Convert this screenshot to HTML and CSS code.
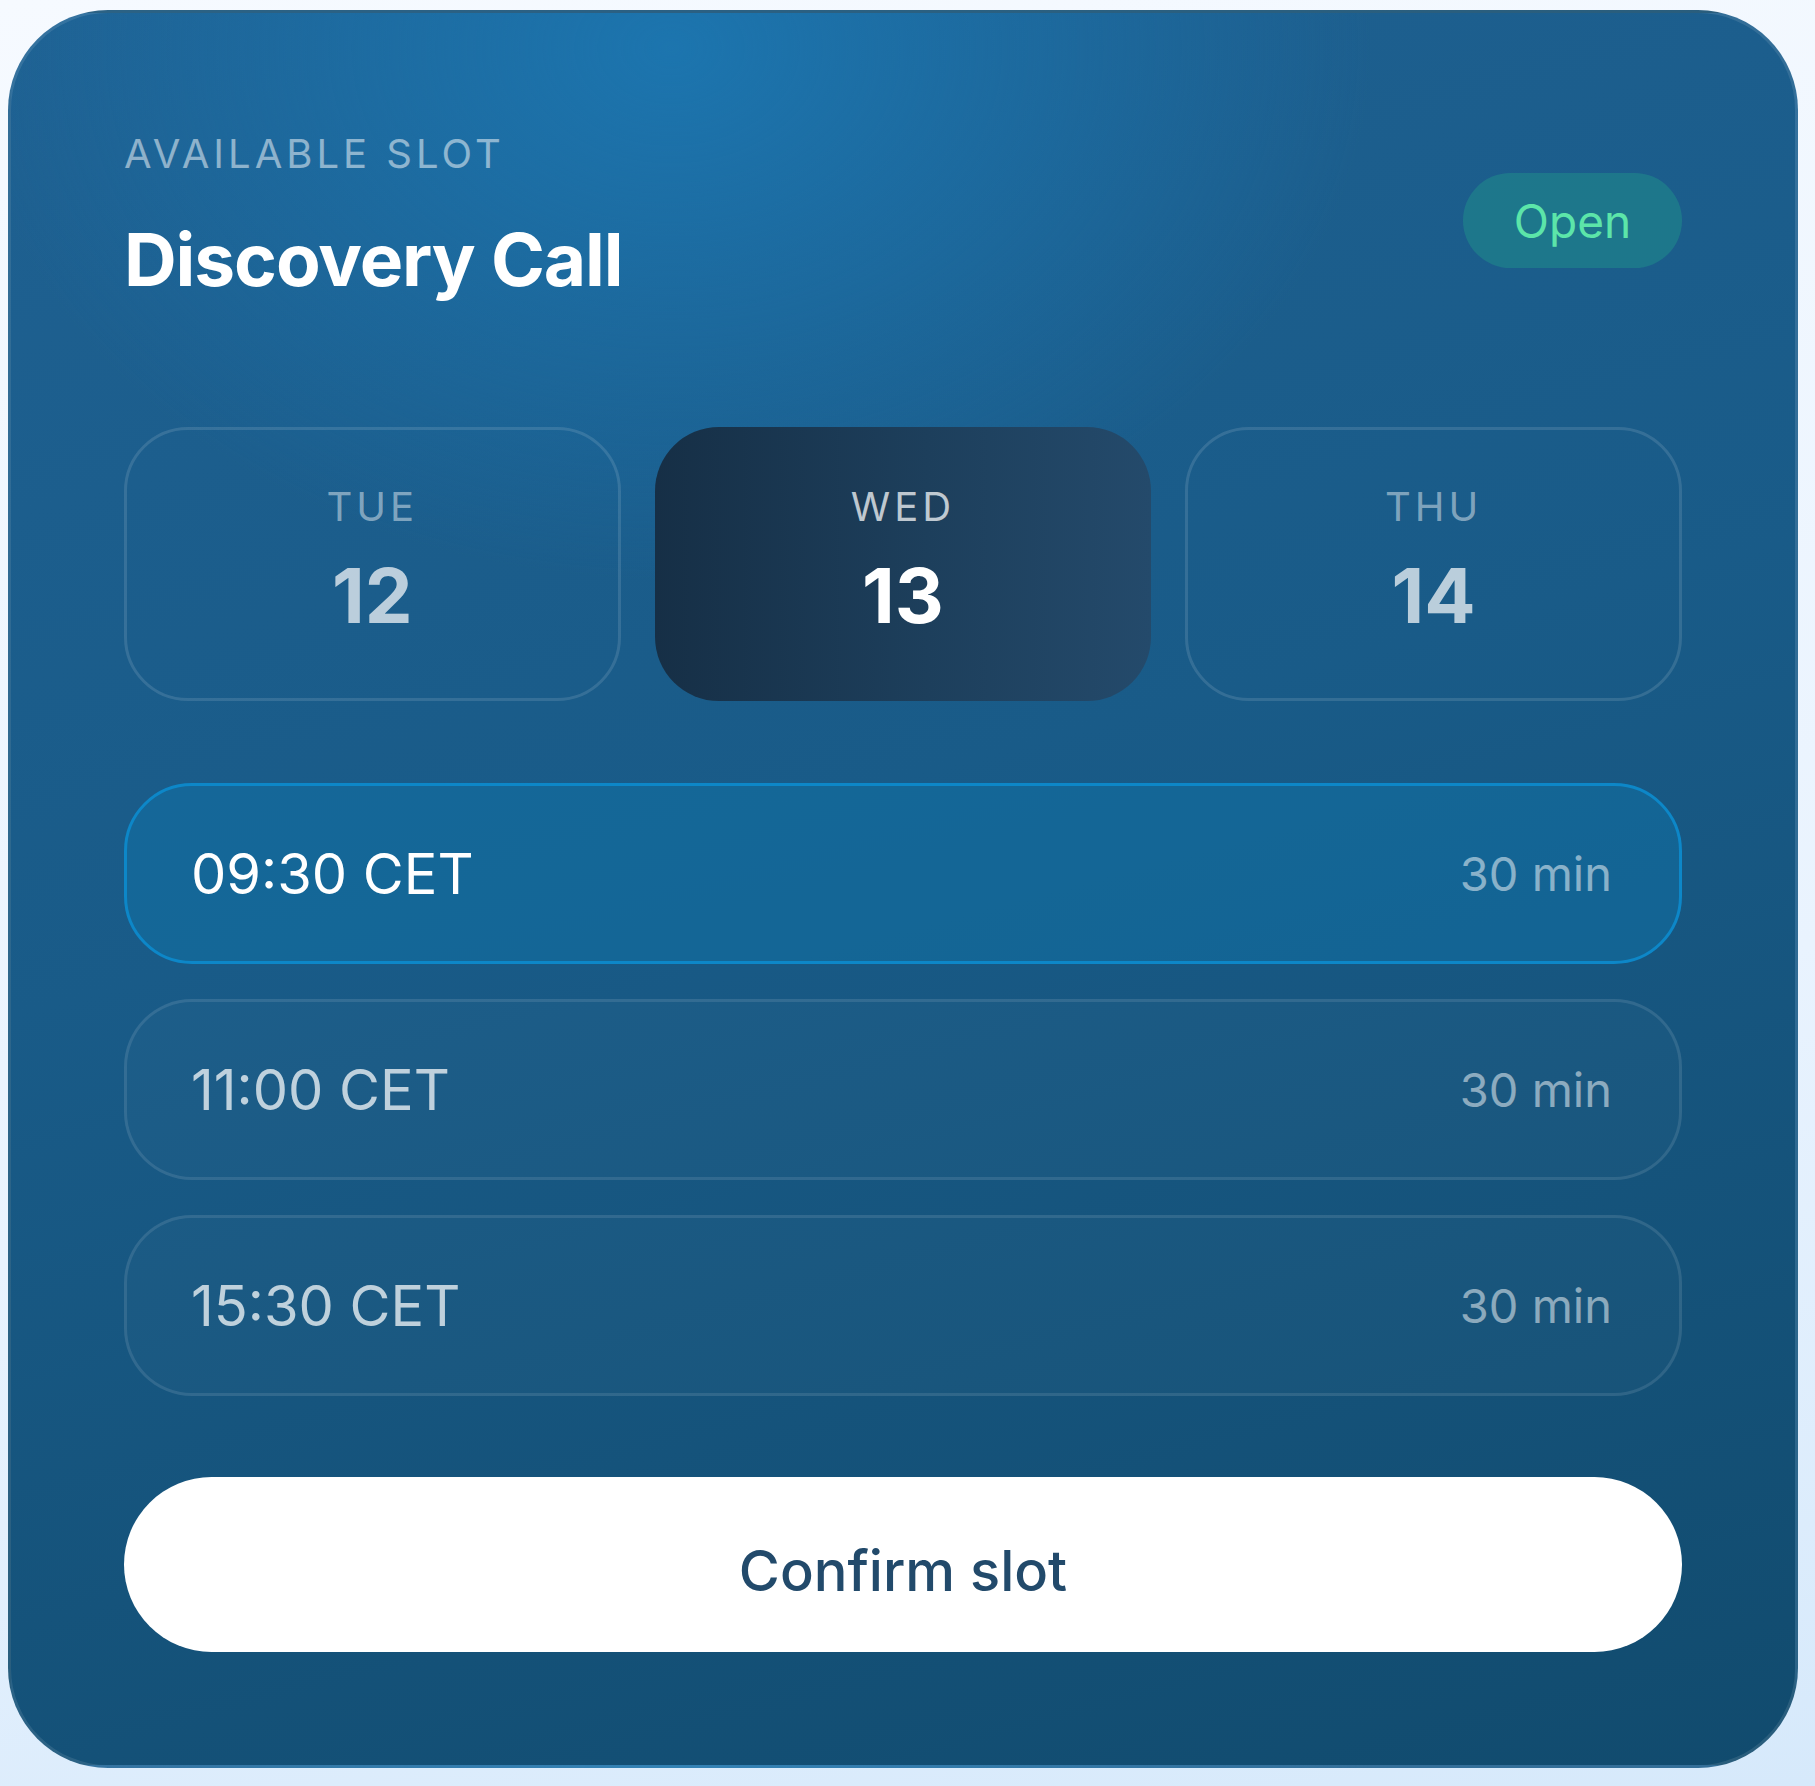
FILE: index.html
```html
<!DOCTYPE html>
<html lang="en">
<head>
  <meta charset="UTF-8">
  <meta name="viewport" content="width=device-width, initial-scale=1.0">
  <title>Discovery Call</title>
  <link rel="stylesheet" href="styles.css">
</head>
<body>
  <div class="card">
    <header class="header">
      <div>
        <p class="eyebrow">Available slot</p>
        <h1>Discovery Call</h1>
      </div>
      <span class="status">Open</span>
    </header>

    <div class="days">
      <div class="day">
        <span class="day-name">Tue</span>
        <span class="day-num">12</span>
      </div>
      <div class="day active">
        <span class="day-name">Wed</span>
        <span class="day-num">13</span>
      </div>
      <div class="day">
        <span class="day-name">Thu</span>
        <span class="day-num">14</span>
      </div>
    </div>

    <div class="slots">
      <div class="slot selected">
        <span class="time">09:30 CET</span>
        <span class="length">30 min</span>
      </div>
      <div class="slot">
        <span class="time">11:00 CET</span>
        <span class="length">30 min</span>
      </div>
      <div class="slot">
        <span class="time">15:30 CET</span>
        <span class="length">30 min</span>
      </div>
    </div>

    <button class="confirm">Confirm slot</button>
  </div>
</body>
</html>
```

FILE: styles.css
```css
body {
  font-family: Inter, 'Noto Sans', sans-serif;
  margin: 0;
  padding: 10px 17px 17px 8px;
  background: linear-gradient(170deg, #f6faff 0%, #e9f3fe 60%, #d6e9fb 100%);
  min-height: 100vh;
  box-sizing: border-box;
}

.card {
  border: 3px solid rgba(255, 255, 255, 0.1);
  border-radius: 100px;
  padding: 117px 113px 113px;
  background:
    radial-gradient(ellipse 1000px 760px at 37% 2%, rgba(28, 118, 176, 0.95) 0%, rgba(28, 118, 176, 0) 70%),
    linear-gradient(165deg, #1f6192 0%, #195b88 45%, #114b6e 100%);
  color: #fff;
}

.header {
  display: flex;
  justify-content: space-between;
  align-items: center;
}

.eyebrow {
  margin: 0 0 39px;
  font-size: 40px;
  line-height: 48px;
  letter-spacing: 0.1em;
  text-transform: uppercase;
  color: rgba(255, 255, 255, 0.5);
}

h1 {
  margin: 0;
  font-size: 73px;
  line-height: 86px;
  font-weight: 700;
  letter-spacing: -0.015em;
}

.status {
  width: 219px;
  height: 95px;
  border-radius: 48px;
  display: flex;
  align-items: center;
  justify-content: center;
  font-size: 46px;
  color: #5ce5a9;
  background: rgba(36, 178, 140, 0.3);
  margin-top: 8px;
}

.days {
  display: grid;
  grid-template-columns: repeat(3, 1fr);
  gap: 34px;
  margin-top: 124px;
}

.day {
  display: flex;
  flex-direction: column;
  align-items: center;
  gap: 22px;
  padding: 53px 0 61px;
  border: 3px solid rgba(255, 255, 255, 0.12);
  border-radius: 64px;
}

.day-name {
  font-size: 40px;
  line-height: 48px;
  letter-spacing: 0.1em;
  text-transform: uppercase;
  color: rgba(255, 255, 255, 0.45);
}

.day-num {
  font-size: 76px;
  line-height: 84px;
  font-weight: 700;
  color: rgba(255, 255, 255, 0.7);
}

.day.active {
  border: none;
  padding: 56px 0 64px;
  background: linear-gradient(90deg, #162f46 0%, #1d3f5c 55%, #244a6b 100%);
}

.day.active .day-name {
  color: rgba(255, 255, 255, 0.72);
}

.day.active .day-num {
  color: #fff;
}

.slots {
  display: flex;
  flex-direction: column;
  gap: 35px;
  margin-top: 82px;
}

.slot {
  height: 181px;
  box-sizing: border-box;
  display: flex;
  justify-content: space-between;
  align-items: center;
  padding: 0 67px 0 64px;
  border: 3px solid rgba(255, 255, 255, 0.1);
  border-radius: 68px;
  background: rgba(255, 255, 255, 0.02);
}

.time {
  font-size: 56px;
  color: rgba(255, 255, 255, 0.72);
}

.length {
  font-size: 47px;
  color: rgba(255, 255, 255, 0.5);
}

.slot.selected {
  border-color: #0d87c8;
  background: rgba(16, 118, 170, 0.45);
}

.slot.selected .time {
  color: #fff;
}

.confirm {
  display: block;
  width: 100%;
  height: 175px;
  margin-top: 81px;
  padding: 12px 0 0;
  border: none;
  border-radius: 88px;
  background: #fff;
  color: #224a6b;
  font-family: inherit;
  font-size: 56px;
  font-weight: 500;
  cursor: pointer;
}
```
